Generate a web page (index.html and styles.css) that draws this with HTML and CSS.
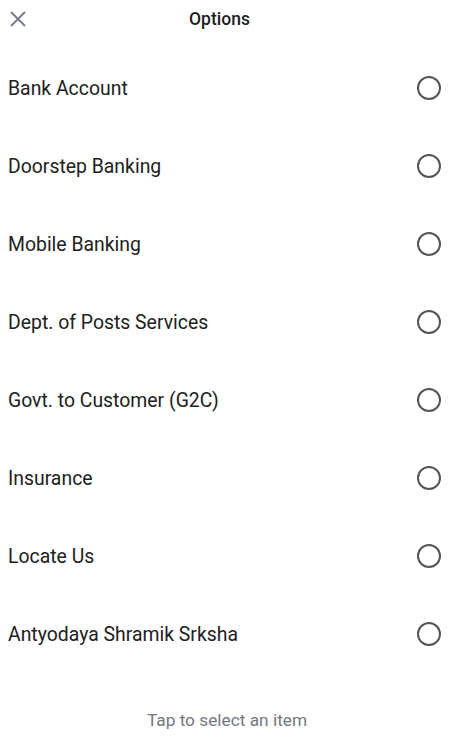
FILE: index.html
```html
<!DOCTYPE html>
<html lang="en">
<head>
    <meta charset="UTF-8">
    <meta name="viewport" content="width=device-width, initial-scale=1.0">
    <title>Options</title>
    <link rel="stylesheet" href="styles.css">
</head>
<body>

<div class="sheet">
    <div class="header">
        <button class="close" aria-label="Close">
            <svg width="16" height="16" viewBox="0 0 16 16">
                <path d="M1 1L15 15M15 1L1 15" stroke="#737b86" stroke-width="1.8" fill="none"/>
            </svg>
        </button>
        <h2>Options</h2>
    </div>
    <ul class="options">
        <li><span>Bank Account</span><i class="radio"></i></li>
        <li><span>Doorstep Banking</span><i class="radio"></i></li>
        <li><span>Mobile Banking</span><i class="radio"></i></li>
        <li><span>Dept. of Posts Services</span><i class="radio"></i></li>
        <li><span>Govt. to Customer (G2C)</span><i class="radio"></i></li>
        <li><span>Insurance</span><i class="radio"></i></li>
        <li><span>Locate Us</span><i class="radio"></i></li>
        <li><span>Antyodaya Shramik Srksha</span><i class="radio"></i></li>
    </ul>
    <p class="hint">Tap to select an item</p>
</div>

</body>
</html>
```

FILE: styles.css
```css
body {
    margin: 0;
    font-family: Roboto, "Liberation Sans", Arial, sans-serif;
    background: #fff;
    color: #212121;
}
.sheet {
    width: 466px;
    height: 750px;
    display: flex;
    flex-direction: column;
}
.header {
    height: 38px;
    display: flex;
    align-items: center;
    justify-content: center;
    position: relative;
}
.close {
    position: absolute;
    left: 10px;
    top: 11px;
    padding: 0;
    border: none;
    background: none;
    width: 16px;
    height: 16px;
    display: flex;
}
h2 {
    margin: 0 0 0 -27px;
    font-size: 17.5px;
    font-weight: 500;
    color: #1c1c1c;
}
.options {
    list-style: none;
    margin: 11px 0 0;
    padding: 0;
}
.options li {
    height: 78px;
    display: flex;
    align-items: center;
    justify-content: space-between;
    padding: 0 25px 0 8px;
    font-size: 19.4px;
}
.radio {
    width: 20px;
    height: 20px;
    border: 2px solid #555;
    border-radius: 50%;
}
.hint {
    margin: 37px 12px 0 0;
    text-align: center;
    font-size: 17.3px;
    color: #737880;
    line-height: 20px;
}
```
